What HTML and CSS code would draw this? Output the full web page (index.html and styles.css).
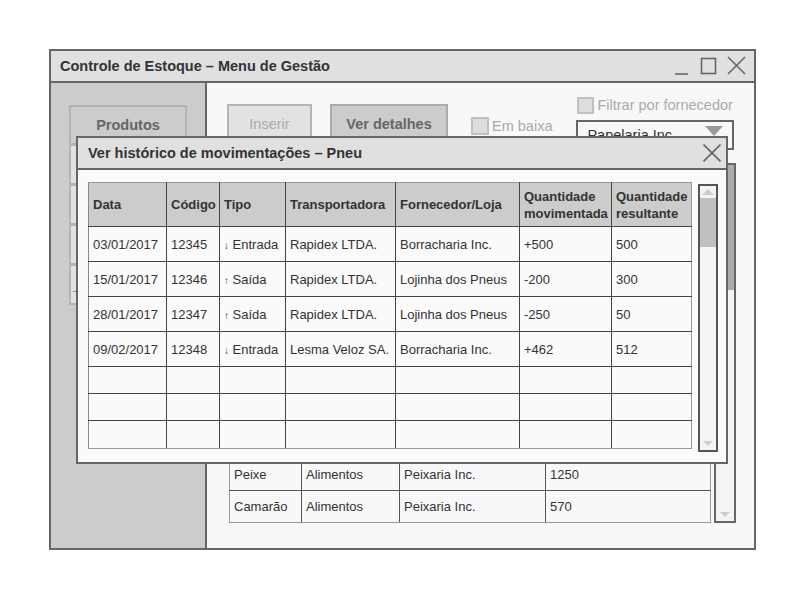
FILE: index.html
```html
<!DOCTYPE html>
<html lang="pt">
<head>
<meta charset="utf-8">
<title>Controle de Estoque</title>
<link rel="stylesheet" href="styles.css">
</head>
<body>
<div class="window">
  <div class="titlebar">
    <span class="title">Controle de Estoque – Menu de Gestão</span>
    <svg class="winctl" width="80" height="30" viewBox="0 0 80 30">
      <line x1="5" y1="23" x2="18" y2="23" stroke="#666" stroke-width="1.6"/>
      <rect x="31.5" y="7.5" width="14" height="15" fill="none" stroke="#666" stroke-width="1.6"/>
      <line x1="58" y1="6" x2="75" y2="23" stroke="#666" stroke-width="1.6"/>
      <line x1="75" y1="6" x2="58" y2="23" stroke="#666" stroke-width="1.6"/>
    </svg>
  </div>
  <div class="main">
    <div class="sidebar">
      <div class="navbtn active">Produtos</div>
      <div class="navbtn"></div>
      <div class="navbtn"></div>
      <div class="navbtn"></div>
      <div class="navbtn dashed"><span class="dash"></span></div>
    </div>
    <div class="content">
      <div class="toolbar">
        <div class="btn disabled">Inserir</div>
        <div class="btn primary">Ver detalhes</div>
        <label class="check low"><span class="box"></span>Em baixa</label>
        <div class="filter">
          <label class="check"><span class="box"></span>Filtrar por fornecedor</label>
          <div class="select">
            <span>Papelaria Inc.</span>
            <svg width="18" height="10" viewBox="0 0 18 10"><polygon points="0,0 18,0 9,10" fill="#999"/></svg>
          </div>
        </div>
      </div>
      <div class="listarea">
        <table class="products">
          <colgroup><col class="p1"><col class="p2"><col class="p3"><col class="p4"></colgroup>
          <thead><tr><th></th><th></th><th></th><th></th></tr></thead>
          <tbody>
            <tr><td></td><td></td><td></td><td></td></tr>
            <tr><td></td><td></td><td></td><td></td></tr>
            <tr><td></td><td></td><td></td><td></td></tr>
            <tr><td></td><td></td><td></td><td></td></tr>
            <tr><td></td><td></td><td></td><td></td></tr>
            <tr><td></td><td></td><td></td><td></td></tr>
            <tr><td></td><td></td><td></td><td></td></tr>
            <tr><td></td><td></td><td></td><td></td></tr>
            <tr><td>Peixe</td><td>Alimentos</td><td>Peixaria Inc.</td><td>1250</td></tr>
            <tr><td>Camarão</td><td>Alimentos</td><td>Peixaria Inc.</td><td>570</td></tr>
          </tbody>
        </table>
        <div class="scroll big">
          <div class="thumb"></div>
          <div class="track"></div>
          <svg class="arrow" width="10" height="5" viewBox="0 0 10 5"><polygon points="0,0 10,0 5,5" fill="#ccc"/></svg>
        </div>
      </div>
    </div>
  </div>

  <div class="modal">
    <div class="modalhead">
      <span class="mtitle">Ver histórico de movimentações – Pneu</span>
      <svg width="18" height="18" viewBox="0 0 18 18">
        <line x1="0.5" y1="0.5" x2="17.5" y2="17.5" stroke="#666" stroke-width="1.6"/>
        <line x1="17.5" y1="0.5" x2="0.5" y2="17.5" stroke="#666" stroke-width="1.6"/>
      </svg>
    </div>
    <div class="modalbody">
      <table class="history">
        <colgroup>
          <col class="c1"><col class="c2"><col class="c3"><col class="c4"><col class="c5"><col class="c6"><col class="c7">
        </colgroup>
        <thead>
          <tr><th>Data</th><th>Código</th><th>Tipo</th><th>Transportadora</th><th>Fornecedor/Loja</th><th>Quantidade movimentada</th><th>Quantidade resultante</th></tr>
        </thead>
        <tbody>
          <tr><td>03/01/2017</td><td>12345</td><td><span class="arr">↓</span> Entrada</td><td>Rapidex LTDA.</td><td>Borracharia Inc.</td><td>+500</td><td>500</td></tr>
          <tr><td>15/01/2017</td><td>12346</td><td><span class="arr">↑</span> Saída</td><td>Rapidex LTDA.</td><td>Lojinha dos Pneus</td><td>-200</td><td>300</td></tr>
          <tr><td>28/01/2017</td><td>12347</td><td><span class="arr">↑</span> Saída</td><td>Rapidex LTDA.</td><td>Lojinha dos Pneus</td><td>-250</td><td>50</td></tr>
          <tr><td>09/02/2017</td><td>12348</td><td><span class="arr">↓</span> Entrada</td><td>Lesma Veloz SA.</td><td>Borracharia Inc.</td><td>+462</td><td>512</td></tr>
          <tr class="empty"><td></td><td></td><td></td><td></td><td></td><td></td><td></td></tr>
          <tr class="empty"><td></td><td></td><td></td><td></td><td></td><td></td><td></td></tr>
          <tr class="empty last"><td></td><td></td><td></td><td></td><td></td><td></td><td></td></tr>
        </tbody>
      </table>
      <div class="scroll small">
        <svg class="arrow up" width="12" height="6" viewBox="0 0 12 6"><polygon points="0,6 12,6 6,0" fill="#ccc"/></svg>
        <div class="thumb"></div>
        <div class="track"></div>
        <svg class="arrow" width="10" height="5" viewBox="0 0 10 5"><polygon points="0,0 10,0 5,5" fill="#ccc"/></svg>
      </div>
    </div>
  </div>
</div>
</body>
</html>
```

FILE: styles.css
```css
* { box-sizing: border-box; }
html, body { margin: 0; padding: 0; background: #ffffff; }
body {
  font-family: "Liberation Sans", Arial, sans-serif;
  color: #333;
  padding: 49px 0 0 49px;
}
.window {
  position: relative;
  width: 707px;
  height: 501px;
  border: 2px solid #666;
  background: #f8f8f8;
  display: flex;
  flex-direction: column;
}
.titlebar {
  height: 32px;
  flex: none;
  background: #e0e0e0;
  border-bottom: 2px solid #666;
  display: flex;
  align-items: center;
  justify-content: space-between;
  padding-left: 9px;
}
.title {
  font-size: 14.5px;
  font-weight: bold;
  color: #333;
}
.winctl { display: block; margin-right: 4px; }
.main {
  flex: 1;
  display: flex;
  min-height: 0;
}
.sidebar {
  width: 156px;
  flex: none;
  background: #ccc;
  border-right: 2px solid #666;
  padding: 22px 0 0 18px;
  display: flex;
  flex-direction: column;
}
.navbtn {
  width: 118px;
  height: 40px;
  border: 2px solid #b4b4b4;
  border-top-width: 1px;
  background: #e2e2e2;
  color: #666;
  font-size: 14.5px;
  font-weight: bold;
  display: flex;
  align-items: center;
  justify-content: center;
}
.navbtn.active { background: #ccc; border-top-width: 2px; }
.navbtn.dashed { justify-content: flex-start; align-items: flex-start; padding: 25px 0 0 2px; }
.dash { width: 4px; height: 1px; background: #888; }
.content {
  flex: 1;
  padding: 14px 19px 0 20px;
  display: flex;
  flex-direction: column;
}
.toolbar {
  display: flex;
  align-items: flex-start;
  height: 53px;
}
.btn {
  height: 40px;
  margin-top: 7px;
  font-size: 14.5px;
  display: flex;
  align-items: center;
  justify-content: center;
  border: 2px solid #b4b4b4;
}
.btn.disabled { width: 85px; background: #e2e2e2; color: #aaa; }
.btn.primary { width: 118px; margin-left: 18px; background: #ccc; color: #666; font-weight: bold; border-color: #aaa; }
.check {
  display: flex;
  align-items: center;
  font-size: 14.5px;
  color: #aaa;
  line-height: 17px;
}
.check .box {
  width: 17px;
  height: 17px;
  border: 2px solid #c0c0c0;
  background: #ddd;
  margin-right: 3px;
}
.check.low { margin-left: 23px; margin-top: 20px; }
.check.low .box { width: 18px; height: 18px; }
.filter {
  margin-left: 24px;
  display: flex;
  flex-direction: column;
  gap: 6px;
}
.filter .check { padding-left: 1px; }
.select {
  width: 158px;
  height: 30px;
  border: 2px solid #666;
  background: #f8f8f8;
  display: flex;
  align-items: center;
  justify-content: space-between;
  padding: 0 9px 0 9px;
  font-size: 14.5px;
  color: #333;
}
.select svg { display: block; margin-top: -8px; }
.listarea {
  margin-top: 13px;
  display: flex;
  gap: 3px;
  padding-left: 2px;
  align-items: flex-start;
}
table { border-collapse: collapse; table-layout: fixed; }
.products { width: 481px; margin-top: 2px; font-size: 13px; }
.products col.p1 { width: 72px; }
.products col.p2 { width: 98px; }
.products col.p3 { width: 146px; }
.products col.p4 { width: 165px; }
.products th, .products td {
  border: 1px solid #555;
  padding: 0 4px;
  text-align: left;
  height: 32px;
  color: #333;
  font-weight: normal;
}
.products th { height: 37px; background: #ccc; font-weight: bold; }
.products tr > :first-child { border-left-color: #999; }
.products tr > :last-child { border-right-color: #999; }
.products tbody tr:last-child td { border-bottom-color: #999; }
.scroll {
  border: 2px solid #666;
  background: #f4f4f4;
  display: flex;
  flex-direction: column;
  align-items: center;
  position: relative;
}
.scroll .thumb { width: 100%; background: #bbb; }
.scroll .track { flex: 1; }
.scroll .arrow { display: block; margin-bottom: 4px; }
.scroll.big { width: 22px; height: 360px; }
.scroll.big .thumb { height: 125px; background: #aaa; }
.scroll.small { width: 21px; height: 268px; margin-top: 2px; border-color: #555; }
.scroll.small .arrow.up { margin: 3px 0 3px 0; }
.scroll.small .thumb { height: 49px; background: #c0c0c0; }

.modal {
  position: absolute;
  left: 25px;
  top: 85px;
  width: 652px;
  height: 328px;
  border: 2px solid #666;
  background: #fafafa;
  display: flex;
  flex-direction: column;
}
.modalhead {
  height: 32px;
  flex: none;
  background: #e0e0e0;
  border-bottom: 2px solid #666;
  display: flex;
  align-items: center;
  justify-content: space-between;
  padding: 0 5px 0 10px;
}
.mtitle { font-size: 14.5px; font-weight: bold; color: #333; }
.modalhead svg { display: block; margin-top: -1px; }
.modalbody {
  padding: 12px 8px 0 10px;
  display: flex;
  gap: 6px;
  align-items: flex-start;
}
.history { width: 603px; font-size: 13px; }
.history col.c1 { width: 78px; }
.history col.c2 { width: 53px; }
.history col.c3 { width: 66px; }
.history col.c4 { width: 110px; }
.history col.c5 { width: 124px; }
.history col.c6 { width: 92px; }
.history col.c7 { width: 80px; }
.history th, .history td {
  border: 1px solid #444;
  padding: 0 4px;
  text-align: left;
  color: #333;
  height: 35px;
  white-space: nowrap;
}
.history th {
  height: 44px;
  background: #ccc;
  font-weight: bold;
  white-space: normal;
  line-height: 17px;
  border-top-color: #999;
  padding-right: 2px;
}
.history tr > :first-child { border-left-color: #888; }
.history tr > :last-child { border-right-color: #999; }
.history tr.empty td { height: 27px; }
.history tr.empty.last td { height: 28px; border-bottom-color: #999; }
.history .arr { font-size: 10px; }
```
